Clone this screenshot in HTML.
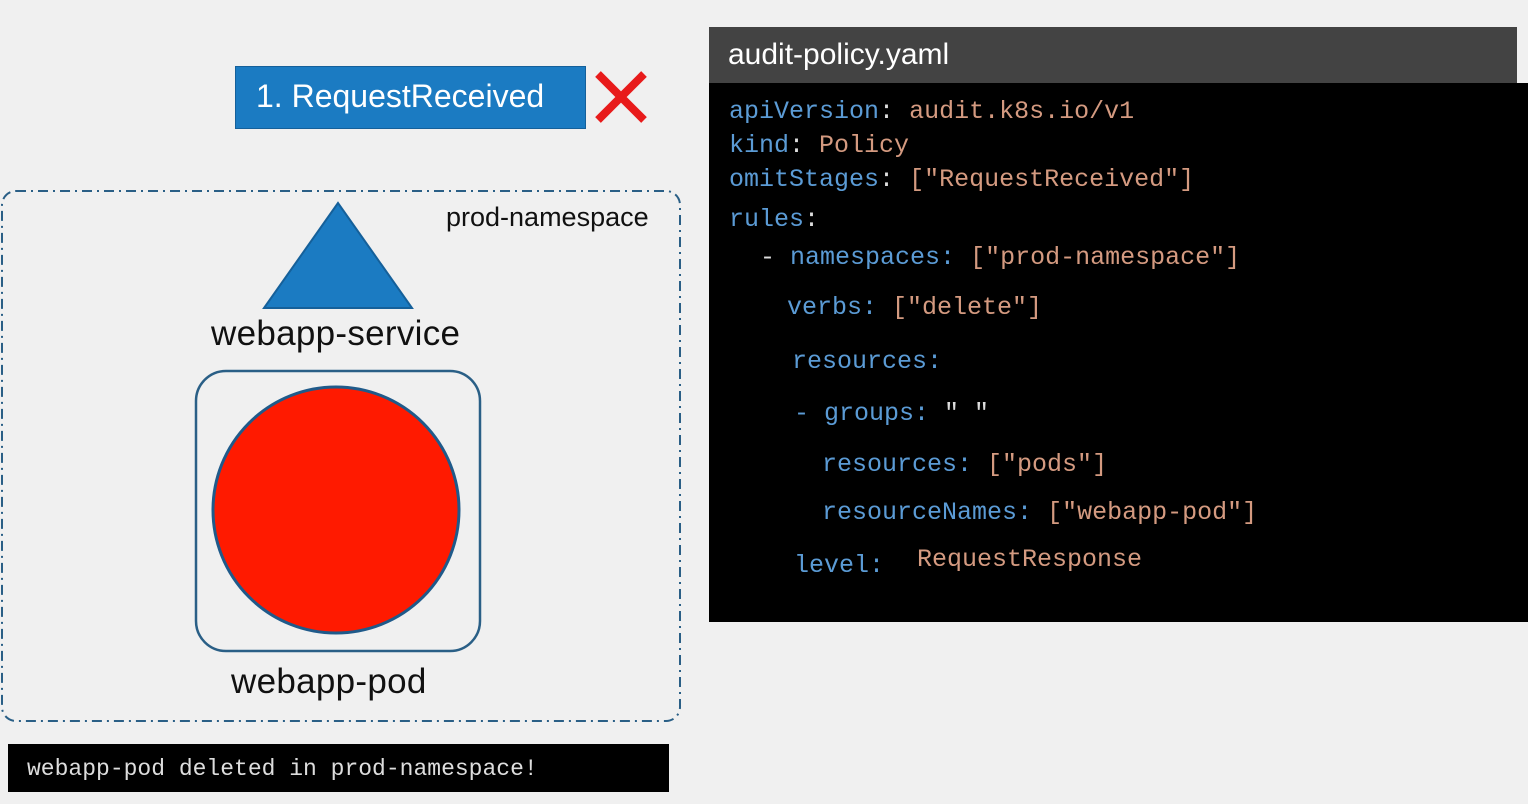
<!DOCTYPE html>
<html><head><style>
body{margin:0;width:1528px;height:804px;background:#f0f0f0;position:relative;overflow:hidden;font-family:"Liberation Sans",sans-serif}
.a{position:absolute;white-space:pre}
.code{font-family:"Liberation Mono",monospace;font-size:25px}
.k{color:#5b9bd5}.v{color:#d49a80}.w{color:#ddd}
</style></head><body>
<div class="a" style="left:235px;top:66px;width:351px;height:63px;background:#1b7bc2;border:1px solid #15609a;box-sizing:border-box"></div>
<div class="a" style="left:256px;top:78px;color:#fff;font-size:32px">1. RequestReceived</div>
<svg class="a" style="left:592px;top:68px" width="58" height="58"><path d="M6 6L52 52M52 6L6 52" stroke="#e81b1b" stroke-width="8"/></svg>
<svg class="a" style="left:0;top:185px" width="690" height="540">
<rect x="2" y="6" width="678" height="530" rx="14" fill="none" stroke="#2a5f86" stroke-width="2" stroke-dasharray="10,5,2,5"/>
<polygon points="338,18 264,123 412,123" fill="#1b7bc2" stroke="#15609a" stroke-width="2"/>
<rect x="196" y="186" width="284" height="280" rx="30" fill="none" stroke="#2a5f86" stroke-width="2.5"/>
<circle cx="336" cy="325" r="123" fill="#ff1a00" stroke="#1f5a8a" stroke-width="3"/>
</svg>
<div class="a" style="left:446px;top:202px;font-size:27px;color:#111">prod-namespace</div>
<div class="a" style="left:211px;top:314px;font-size:35px;color:#111;letter-spacing:0.3px">webapp-service</div>
<div class="a" style="left:231px;top:662px;font-size:35px;color:#111;letter-spacing:0.3px">webapp-pod</div>
<div class="a" style="left:8px;top:744px;width:661px;height:48px;background:#000"></div>
<div class="a" style="left:27px;top:756px;font-family:'Liberation Mono',monospace;font-size:23px;color:#ddd">webapp-pod deleted in prod-namespace!</div>
<div class="a" style="left:709px;top:27px;width:808px;height:57px;background:#434343"></div>
<div class="a" style="left:728px;top:38px;font-size:30px;color:#fff">audit-policy.yaml</div>
<div class="a" style="left:709px;top:83px;width:819px;height:539px;background:#000"></div>
<div class="a code" style="left:729px;top:97px"><span class="k">apiVersion</span><span class="w">:</span> <span class="v">audit.k8s.io/v1</span></div>
<div class="a code" style="left:729px;top:131px"><span class="k">kind</span><span class="w">:</span> <span class="v">Policy</span></div>
<div class="a code" style="left:729px;top:165px"><span class="k">omitStages</span><span class="w">:</span> <span class="v">["RequestReceived"]</span></div>
<div class="a code" style="left:729px;top:205px"><span class="k">rules</span><span class="w">:</span></div>
<div class="a code" style="left:760px;top:243px"><span class="w">-</span> <span class="k">namespaces:</span> <span class="v">["prod-namespace"]</span></div>
<div class="a code" style="left:787px;top:293px"><span class="k">verbs:</span> <span class="v">["delete"]</span></div>
<div class="a code" style="left:792px;top:347px"><span class="k">resources:</span></div>
<div class="a code" style="left:794px;top:399px"><span class="k">- groups:</span> <span class="w">" "</span></div>
<div class="a code" style="left:822px;top:450px"><span class="k">resources:</span> <span class="v">["pods"]</span></div>
<div class="a code" style="left:822px;top:498px"><span class="k">resourceNames:</span> <span class="v">["webapp-pod"]</span></div>
<div class="a code" style="left:794px;top:551px"><span class="k">level:</span></div>
<div class="a code" style="left:917px;top:545px"><span class="v">RequestResponse</span></div>
</body></html>
